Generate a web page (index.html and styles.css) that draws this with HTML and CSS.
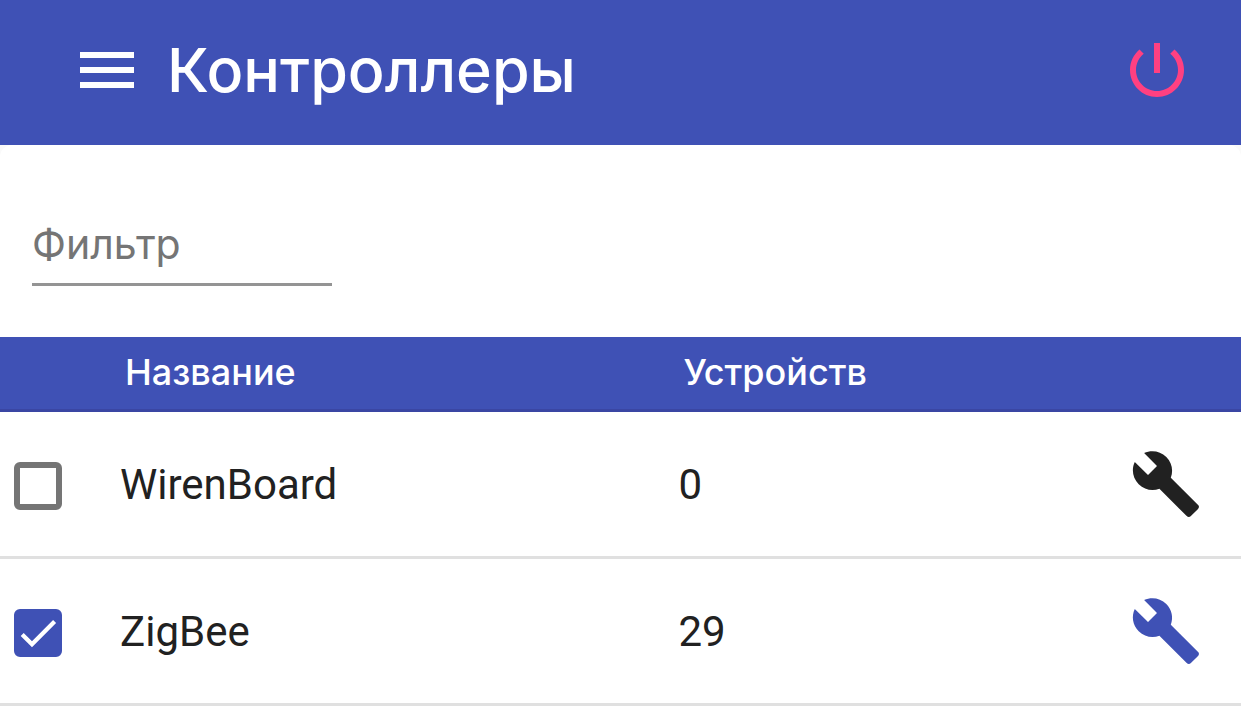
FILE: index.html
```
<!DOCTYPE html>
<html lang="ru">
<head>
<meta charset="utf-8">
<title>Контроллеры</title>
<link rel="stylesheet" href="styles.css">
</head>
<body>
<header class="toolbar">
  <button class="icon-button menu" type="button" aria-label="Меню">
    <svg class="icon-large" viewBox="0 0 24 24"><path d="M3 18h18v-2H3v2zm0-5h18v-2H3v2zm0-7v2h18V6H3z"/></svg>
  </button>
  <h1 class="title">Контроллеры</h1>
  <button class="icon-button power" type="button" aria-label="Выход">
    <svg class="icon-large" viewBox="0 0 24 24"><path d="M13 3h-2v10h2V3zm4.830 2.170l-1.420 1.420C17.990 7.860 19 9.810 19 12c0 3.870-3.130 7-7 7s-7-3.130-7-7c0-2.190 1.010-4.140 2.580-5.420L6.170 5.170C4.230 6.820 3 9.260 3 12c0 4.970 4.030 9 9 9s9-4.030 9-9c0-2.740-1.230-5.180-3.170-6.830z"/></svg>
  </button>
</header>
<main class="card">
  <div class="filter">
    <input class="filter-input" type="text" placeholder="Фильтр" aria-label="Фильтр">
  </div>
  <table class="table">
    <colgroup><col class="col-check"><col class="col-name"><col class="col-count"><col class="col-action"></colgroup>
    <thead>
      <tr><th></th><th class="head-cell">Название</th><th class="head-cell">Устройств</th><th></th></tr>
    </thead>
    <tbody>
      <tr>
        <td class="check-cell"><input class="checkbox" type="checkbox" aria-label="WirenBoard"></td>
        <td class="text-cell">WirenBoard</td>
        <td class="text-cell">0</td>
        <td><button class="icon-button wrench" type="button" aria-label="Настроить WirenBoard"><svg class="icon-large" viewBox="0 0 24 24"><path d="M22.700 19l-9.100-9.100c.9-2.300.4-5-1.500-6.900-2-2-5-2.400-7.400-1.300L9 6 6 9 1.600 4.700C.4 7.100.9 10.100 2.900 12.100c1.900 1.900 4.600 2.400 6.900 1.500l9.100 9.100c.4.4 1 .4 1.400 0l2.300-2.300c.5-.4.5-1.100.1-1.400z"/></svg></button></td>
      </tr>
      <tr>
        <td class="check-cell"><input class="checkbox" type="checkbox" aria-label="ZigBee" checked></td>
        <td class="text-cell">ZigBee</td>
        <td class="text-cell">29</td>
        <td><button class="icon-button wrench wrench-active" type="button" aria-label="Настроить ZigBee"><svg class="icon-large" viewBox="0 0 24 24"><path d="M22.700 19l-9.100-9.100c.9-2.300.4-5-1.500-6.900-2-2-5-2.400-7.400-1.300L9 6 6 9 1.600 4.700C.4 7.100.9 10.100 2.900 12.100c1.900 1.900 4.600 2.400 6.900 1.500l9.100 9.100c.4.4 1 .4 1.400 0l2.300-2.300c.5-.4.5-1.100.1-1.400z"/></svg></button></td>
      </tr>
    </tbody>
  </table>
</main>
</body>
</html>
```
FILE: styles.css
```
* { box-sizing: border-box; }
body {
  margin: 0;
  background: #fafafa;
  color: #212121;
  font-family: Roboto, "Liberation Sans", sans-serif;
}
.toolbar {
  display: flex;
  align-items: center;
  min-height: 145px;
  padding: 0 48px 5px 71px;
  background: #3f51b5;
  color: #fff;
}
.card {
  min-height: calc(100vh - 145px);
  border-radius: 12px 12px 0 0;
  background: #fff;
}
.title {
  flex: 1;
  margin: 0 0 0 24px;
  font: 500 61px/72px "Inter", sans-serif;
}
.icon-button {
  display: block;
  padding: 0;
  border: 0;
  background: none;
  color: inherit;
}
.icon-large {
  display: block;
  width: 72px;
  height: 72px;
  fill: currentColor;
}
.power { color: #ff4081; }
.filter { padding: 72px 32px 51px; }
.filter-input {
  display: block;
  width: 300px;
  height: 69px;
  padding: 0 0 13px;
  border: 0;
  border-bottom: 3px solid #949494;
  border-radius: 0;
  outline: 0;
  background: none;
  color: inherit;
  font: 41px/53px "Inter", sans-serif;
}
.filter-input::placeholder { color: #757575; opacity: 1; }
.table {
  width: 100%;
  border-collapse: separate;
  border-spacing: 0;
  table-layout: fixed;
  font-size: 42px;
  line-height: 48px;
  text-align: left;
}
.col-check { width: 120px; }
.col-name { width: 45%; }
.col-action { width: 111px; }
.table th {
  height: 75px;
  padding: 0 0 3px;
  border-bottom: 3px solid #3a46a3;
  background: #3f51b5;
  color: #fff;
}
.table .head-cell {
  padding-left: 5px;
  font: 500 36px/48px "Inter", sans-serif;
}
.table td {
  height: 147px;
  padding: 0;
  border-bottom: 3px solid #e0e0e0;
}
.table .text-cell { padding-top: 2px; }
.table .check-cell { padding: 4px 0 0 14px; }
.checkbox {
  display: block;
  width: 48px;
  height: 48px;
  margin: 0;
  border: 6px solid #757575;
  border-radius: 6px;
  appearance: none;
  background: #fff;
}
.checkbox:checked {
  border-color: #3f51b5;
  background: #3f51b5 url("data:image/svg+xml,%3Csvg xmlns='http://www.w3.org/2000/svg' viewBox='0 0 24 24'%3E%3Cpath d='M4.100 12.700L9 17.600 20.300 6.300' fill='none' stroke='white' stroke-width='2.130'/%3E%3C/svg%3E") center / 48px no-repeat;
}
.wrench { color: #212121; }
.wrench-active { color: #3f51b5; }
```
